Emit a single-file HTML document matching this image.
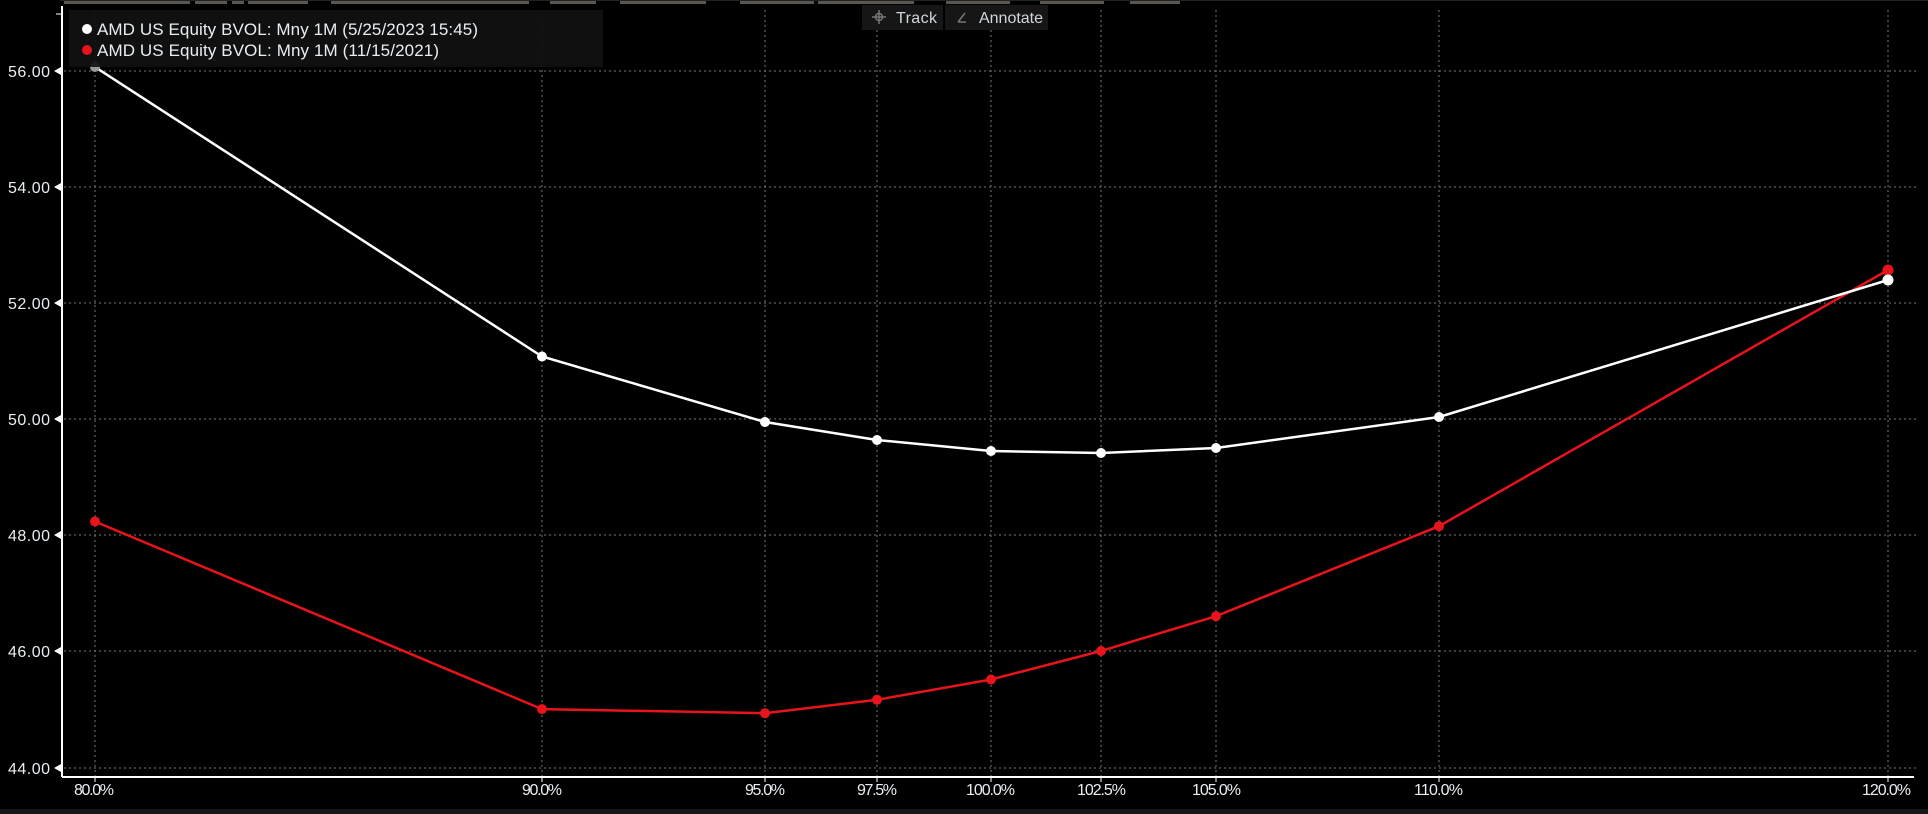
<!DOCTYPE html>
<html><head><meta charset="utf-8"><style>
html,body{margin:0;padding:0;background:#000;width:1928px;height:814px;overflow:hidden}
svg{display:block}
text{font-family:"Liberation Sans",sans-serif}
</style></head><body>
<svg width="1928" height="814" viewBox="0 0 1928 814" xmlns="http://www.w3.org/2000/svg">
<rect width="1928" height="814" fill="#000"/>
<g fill="#5a5752">
<rect x="64" y="1" width="126" height="3"/><rect x="195" y="1" width="32" height="3"/><rect x="232" y="1" width="12" height="3"/><rect x="248" y="1" width="60" height="3"/>
<rect x="331" y="1" width="198" height="3"/><rect x="550" y="1" width="46" height="3"/><rect x="620" y="1" width="86" height="3"/>
<rect x="740" y="1" width="74" height="3"/><rect x="818" y="1" width="96" height="3"/><rect x="946" y="1" width="64" height="3"/><rect x="1040" y="1" width="64" height="3"/><rect x="1130" y="1" width="50" height="3"/>
</g>
<rect x="60" y="0" width="1868" height="1" fill="#222"/>
<g stroke="#777" stroke-width="1" stroke-dasharray="2,3" fill="none">
<line x1="64" y1="71" x2="1916" y2="71"/><line x1="64" y1="187" x2="1916" y2="187"/><line x1="64" y1="303" x2="1916" y2="303"/>
<line x1="64" y1="419" x2="1916" y2="419"/><line x1="64" y1="535" x2="1916" y2="535"/><line x1="64" y1="651" x2="1916" y2="651"/><line x1="64" y1="768" x2="1916" y2="768"/>
<line x1="95" y1="10" x2="95" y2="776"/><line x1="542" y1="10" x2="542" y2="776"/><line x1="765" y1="10" x2="765" y2="776"/><line x1="877" y1="10" x2="877" y2="776"/>
<line x1="991" y1="10" x2="991" y2="776"/><line x1="1101" y1="10" x2="1101" y2="776"/><line x1="1216" y1="10" x2="1216" y2="776"/><line x1="1439" y1="10" x2="1439" y2="776"/><line x1="1888" y1="10" x2="1888" y2="776"/>
</g>
<line x1="62" y1="6" x2="62" y2="777" stroke="#fff" stroke-width="2"/>
<line x1="62" y1="777" x2="1914" y2="777" stroke="#fff" stroke-width="2"/>
<line x1="56" y1="14" x2="62" y2="14" stroke="#fff" stroke-width="1"/>
<g fill="#fff">
<polygon points="54,71 61,67 61,75"/><polygon points="54,187 61,183 61,191"/><polygon points="54,303 61,299 61,307"/><polygon points="54,419 61,415 61,423"/><polygon points="54,535 61,531 61,539"/><polygon points="54,651 61,647 61,655"/><polygon points="54,768 61,764 61,772"/>
</g>
<g stroke="#fff"><line x1="95" y1="777" x2="95" y2="782"/><line x1="542" y1="777" x2="542" y2="782"/><line x1="765" y1="777" x2="765" y2="782"/><line x1="877" y1="777" x2="877" y2="782"/><line x1="991" y1="777" x2="991" y2="782"/><line x1="1101" y1="777" x2="1101" y2="782"/><line x1="1216" y1="777" x2="1216" y2="782"/><line x1="1439" y1="777" x2="1439" y2="782"/><line x1="1888" y1="777" x2="1888" y2="782"/></g>
<g fill="#e8eef2" font-size="16" text-anchor="end">
<text x="50" y="77" textLength="42">56.00</text><text x="50" y="193" textLength="42">54.00</text><text x="50" y="309" textLength="42">52.00</text>
<text x="50" y="425" textLength="42">50.00</text><text x="50" y="541" textLength="42">48.00</text><text x="50" y="657" textLength="42">46.00</text><text x="50" y="774" textLength="42">44.00</text>
</g>
<g fill="#e8eef2" font-size="16">
<text x="74" y="795" textLength="40">80.0%</text><text x="522" y="795" textLength="40">90.0%</text><text x="745" y="795" textLength="40">95.0%</text>
<text x="857" y="795" textLength="40">97.5%</text><text x="966" y="795" textLength="49">100.0%</text><text x="1077" y="795" textLength="49">102.5%</text>
<text x="1192" y="795" textLength="49">105.0%</text><text x="1414" y="795" textLength="49">110.0%</text><text x="1862" y="795" textLength="49">120.0%</text>
</g>
<rect x="0" y="809" width="1928" height="5" fill="#17171c"/>
<polyline fill="none" stroke="#e8141b" stroke-width="2.5" points="95,521.5 542,709.1 765,713.2 877,699.8 991,679.5 1101,651 1216,616.2 1439,526.2 1888,270"/>
<g fill="#e8141b">
<circle cx="95" cy="521.5" r="5"/><circle cx="542" cy="709.1" r="5"/><circle cx="765" cy="713.2" r="5"/><circle cx="877" cy="699.8" r="5"/><circle cx="991" cy="679.5" r="5"/><circle cx="1101" cy="651" r="5"/><circle cx="1216" cy="616.2" r="5"/><circle cx="1439" cy="526.2" r="5"/><circle cx="1888" cy="270" r="5.5"/>
</g>
<polyline fill="none" stroke="#fff" stroke-width="2.5" points="95,67 542,356.5 765,422 877,440 991,451 1101,453 1216,448 1439,417 1888,280"/>
<g fill="#fff">
<circle cx="95" cy="67" r="5" fill="#9a9a9a"/><circle cx="542" cy="356.5" r="5"/><circle cx="765" cy="422" r="5"/><circle cx="877" cy="440" r="5"/><circle cx="991" cy="451" r="5"/><circle cx="1101" cy="453" r="5"/><circle cx="1216" cy="448" r="5"/><circle cx="1439" cy="417" r="5"/><circle cx="1888" cy="280" r="5.5"/>
</g>
<rect x="69" y="10" width="534" height="57" fill="#111" opacity="0.92"/>
<circle cx="87" cy="29" r="5" fill="#fff"/>
<circle cx="87" cy="50" r="5" fill="#e8141b"/>
<g fill="#e8eef2" font-size="17">
<text x="97" y="35" textLength="381">AMD US Equity BVOL: Mny 1M (5/25/2023 15:45)</text>
<text x="97" y="56" textLength="342">AMD US Equity BVOL: Mny 1M (11/15/2021)</text>
</g>
<rect x="862" y="5" width="81" height="25" fill="#161616"/>
<rect x="945" y="5" width="103" height="25" fill="#161616"/>
<g stroke="#777" stroke-width="1.5" fill="none">
<circle cx="879" cy="17" r="3.5"/><line x1="879" y1="10" x2="879" y2="24"/><line x1="872" y1="17" x2="886" y2="17"/>
<line x1="958" y1="22" x2="965" y2="13"/><line x1="958" y1="22" x2="966" y2="22"/>
</g>
<g fill="#cfd8de" font-size="16">
<text x="896" y="23" textLength="41">Track</text>
<text x="979" y="23" textLength="64">Annotate</text>
</g>
</svg>
</body></html>
